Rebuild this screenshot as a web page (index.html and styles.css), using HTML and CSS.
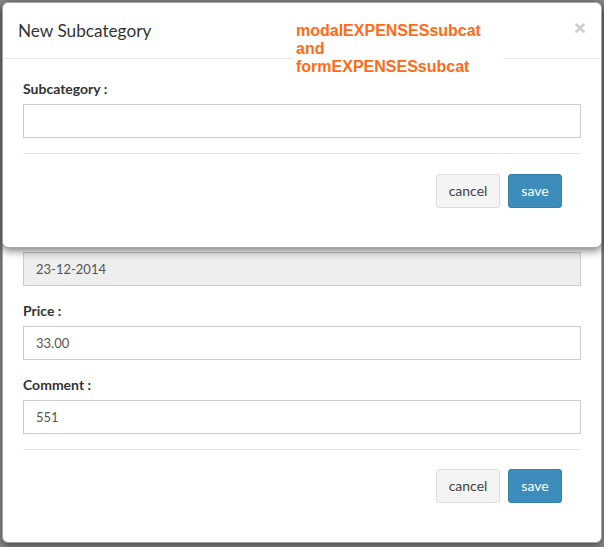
FILE: index.html
```html
<!DOCTYPE html>
<html>
<head>
<meta charset="utf-8">
<link rel="stylesheet" href="styles.css">
</head>
<body>
<div class="stage">
  <div class="modal modal-back">
    <div class="modal-body back-body">
      <div class="form-group">
        <div class="input disabled">23-12-2014</div>
      </div>
      <div class="form-group">
        <label class="lbl">Price :</label>
        <div class="input">33.00</div>
      </div>
      <div class="form-group">
        <label class="lbl">Comment :</label>
        <div class="input">551</div>
      </div>
      <hr class="sep">
      <div class="actions back-actions">
        <button class="btn btn-default">cancel</button>
        <button class="btn btn-primary">save</button>
      </div>
    </div>
  </div>

  <div class="modal modal-front">
    <div class="modal-header">
      <h4 class="modal-title">New Subcategory</h4>
      <span class="close">&times;</span>
    </div>
    <div class="modal-body front-body">
      <div class="form-group">
        <label class="lbl">Subcategory :</label>
        <div class="input"></div>
      </div>
      <hr class="sep">
      <div class="actions">
        <button class="btn btn-default">cancel</button>
        <button class="btn btn-primary">save</button>
      </div>
    </div>
    <div class="note">modalEXPENSESsubcat<br>and<br>formEXPENSESsubcat</div>
  </div>
</div>
</body>
</html>
```
FILE: styles.css
```css
* { box-sizing: border-box; }
html, body { margin: 0; padding: 0; }
body {
  width: 604px;
  height: 547px;
  overflow: hidden;
  background: #8c8c8c;
  font-family: Lato, "Liberation Sans", sans-serif;
  font-size: 14px;
  color: #333;
}
.stage {
  position: relative;
  padding: 2px 2px 0 2px;
  height: 547px;
}
.modal {
  background: #fff;
  border: 1px solid rgba(0,0,0,.35);
  border-radius: 6px;
  box-shadow: 0 3px 9px rgba(0,0,0,.5);
}
.modal-back {
  width: 600px;
}
.modal-front {
  position: absolute;
  top: 2px;
  left: 2px;
  width: 600px;
}
.modal-header {
  position: relative;
  padding: 15px 15px;
  border-bottom: 1px solid #e5e5e5;
}
.modal-title {
  margin: 0;
  font-size: 17.2px;
  font-weight: 400;
  line-height: 25px;
  color: #333;
}
.close {
  position: absolute;
  right: 15px;
  top: 14px;
  font-family: "Liberation Sans", Arial, sans-serif;
  font-size: 21px;
  font-weight: 700;
  line-height: 1;
  color: #000;
  opacity: .2;
}
.modal-body {
  padding: 20px 20px 38px;
}
.front-body {
  padding-bottom: 39px;
}
.back-body {
  padding-top: 249.4px;
  padding-bottom: 39px;
}
.form-group {
  display: flex;
  flex-direction: column;
  margin-bottom: 15px;
}
.lbl {
  font-weight: 700;
  line-height: 20px;
  margin-bottom: 5px;
  color: #333;
}
.input {
  height: 34px;
  padding: 6px 12px;
  line-height: 20px;
  font-size: 13px;
  border: 1px solid #ccc;
  color: #555;
  background: #fff;
}
.input.disabled {
  background: #eee;
}
.sep {
  margin: 0;
  border: 0;
  border-top: 1px solid #e5e5e5;
}
.actions {
  display: flex;
  justify-content: flex-end;
  gap: 8px;
  padding: 20px 19px 0 0;
}
.back-actions {
  padding-top: 19px;
}
.btn {
  font-family: Lato, "Liberation Sans", sans-serif;
  font-size: 14px;
  line-height: 20px;
  height: 34px;
  padding: 6px 0;
  text-align: center;
  border-radius: 3px;
  border: 1px solid transparent;
}
.btn-default {
  width: 64px;
  background: #f4f4f4;
  border-color: #ddd;
  color: #444;
}
.btn-primary {
  width: 54px;
  background: #3c8dbc;
  border-color: #367fa9;
  color: #fff;
}
.note {
  position: absolute;
  left: 290px;
  top: 19px;
  width: 210px;
  padding: 0 0 0 3px;
  background: #fff;
  font-family: "Liberation Sans", Arial, sans-serif;
  font-weight: 700;
  font-size: 16px;
  line-height: 18px;
  color: #ff6a17;
}
```
